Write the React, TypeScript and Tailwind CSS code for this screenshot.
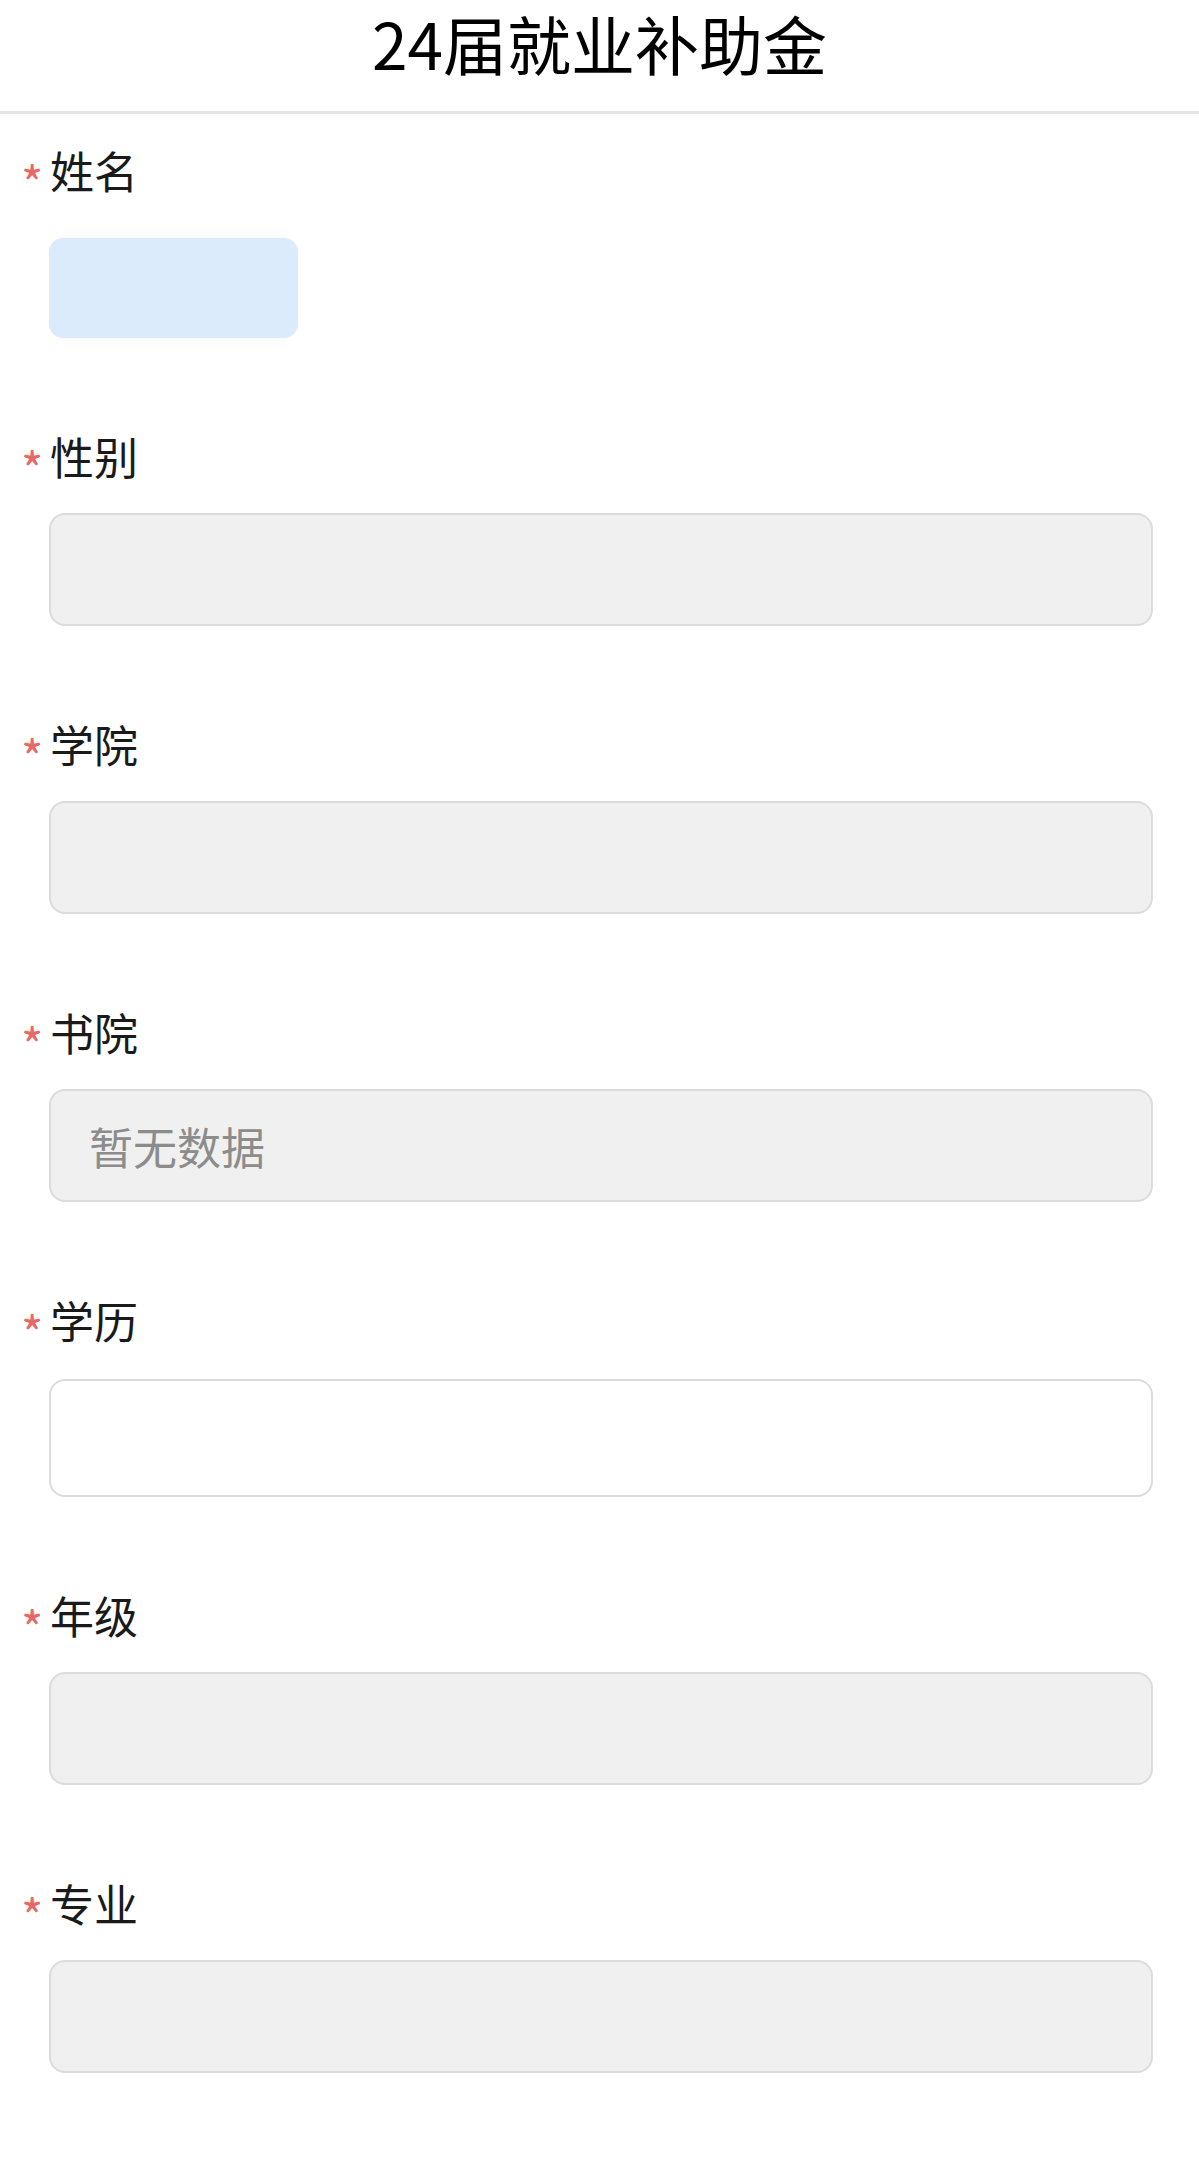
import React from 'react';

type Field = {
  label: string;
  kind: 'name' | 'readonly' | 'input';
  value?: string;
};

const fields: Field[] = [
  { label: '姓名', kind: 'name' },
  { label: '性别', kind: 'readonly' },
  { label: '学院', kind: 'readonly' },
  { label: '书院', kind: 'readonly', value: '暂无数据' },
  { label: '学历', kind: 'input' },
  { label: '年级', kind: 'readonly' },
  { label: '专业', kind: 'readonly' },
];

const font = { fontFamily: '"Noto Sans CJK SC", "Noto Sans", sans-serif' };

const Label = ({ text }: { text: string }) => (
  <div className="h-[60px] flex items-center pl-[21px]">
    <span className="w-[18px] text-[48px] leading-none text-[#e86868] translate-y-[11px]">*</span>
    <span className="ml-[11px] text-[44px] leading-none text-[#1a1a1a]">{text}</span>
  </div>
);

const FieldBlock = ({ f, first }: { f: Field; first: boolean }) => (
  <div className={first ? 'pt-[26px]' : 'pt-[88px]'}>
    <Label text={f.label} />
    {f.kind === 'name' && (
      <div className="mt-[38px] ml-[49px] w-[249px] h-[100px] rounded-[14px] bg-[#dcebfb]" />
    )}
    {f.kind === 'readonly' && (
      <div className="mt-[27px] ml-[49px] mr-[46px] h-[113px] rounded-[16px] border-2 border-[#dcdcdc] bg-[#f0f0f0] flex items-center pl-[38px]">
        {f.value && <span className="text-[44px] leading-none text-[#8c8c8c]">{f.value}</span>}
      </div>
    )}
    {f.kind === 'input' && (
      <div className="mt-[29px] ml-[49px] mr-[46px] h-[118px] rounded-[16px] border-2 border-[#dcdcdc] bg-white" />
    )}
  </div>
);

export default function App() {
  return (
    <div className="w-[1199px] min-h-[2180px] bg-white" style={font}>
      <header className="h-[114px] flex items-start justify-center pt-[10px] border-b-[3px] border-[#e4e4e4]">
        <h1 className="text-[64px] leading-none text-black">24届就业补助金</h1>
      </header>
      {fields.map((f, i) => (
        <FieldBlock key={f.label} f={f} first={i === 0} />
      ))}
    </div>
  );
}
